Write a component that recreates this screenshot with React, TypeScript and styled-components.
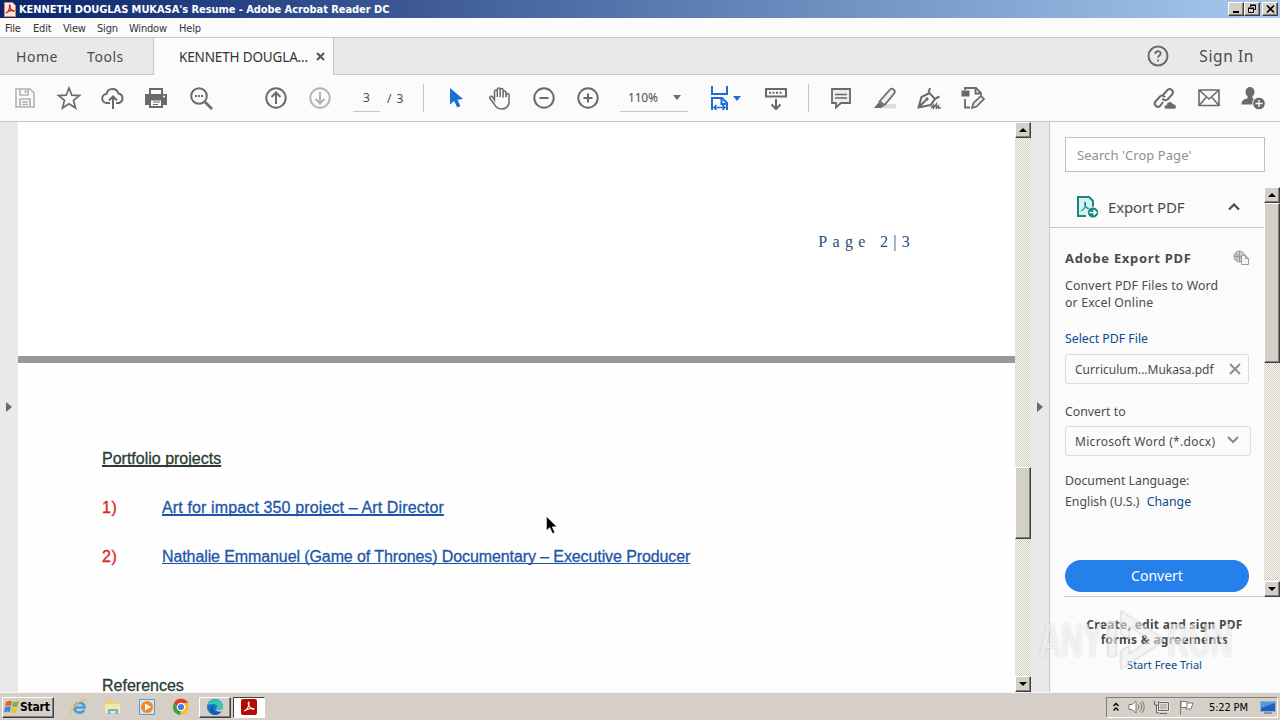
import type { ReactNode } from 'react';
import styled, { createGlobalStyle, css } from 'styled-components';

const GlobalStyle = createGlobalStyle`
  * {
    box-sizing: border-box;
  }

  body {
    margin: 0;
    overflow: hidden;
  }

  button {
    font: inherit;
    padding: 0;
    border: none;
    background: none;
  }

  svg {
    display: block;
    flex: none;
  }

  h1, h2, h3, p, ol {
    margin: 0;
    padding: 0;
    font-weight: normal;
  }
`;

type IconProps = { children: ReactNode; size?: number; color?: string };

const Icon = ({ children, size = 28, color = '#6a6a6a' }: IconProps) => (
  <svg
    width={size}
    height={size}
    viewBox={`0 0 ${size} ${size}`}
    fill='none'
    stroke={color}
    strokeWidth='2'
  >
    {children}
  </svg>
);

const TitleBar = () => (
  <StyledTitleBar>
    <svg width='12' height='15' viewBox='0 0 12 15'>
      <path d='M.5.5h8l3 3v11H.5z' fill='#fbe9e6' stroke='#d9806f' />
      <path d='M2 11c3-1 4-5 3.500-7.500C5 2.500 6.500 3 6 5c.500 3 3 4.500 4 4C9 8 5 8.500 2 11z' fill='none' stroke='#c8200f' strokeWidth='1.300' />
    </svg>
    <h1>KENNETH DOUGLAS MUKASA's Resume - Adobe Acrobat Reader DC</h1>
    <WindowButton>
      <svg width='11' height='10'><path d='M2 8h6' stroke='#000' strokeWidth='2' /></svg>
    </WindowButton>
    <WindowButton>
      <svg width='11' height='10' fill='none' stroke='#000'>
        <path d='M3.500 3V1.500h5v4H7M3 1h6M1.500 4.500h5v4h-5zM1 4h6' />
      </svg>
    </WindowButton>
    <WindowButton $gap>
      <svg width='11' height='10'><path d='M2 1.500l7 7M9 1.500l-7 7' stroke='#000' strokeWidth='1.600' /></svg>
    </WindowButton>
  </StyledTitleBar>
);

const Toolbar = () => (
  <StyledToolbar>
    <Tool>
      <Icon color='#b4b4b4'>
        <path d='M5 5h14l4 4v14H5zM9 5v6h8V5M9 23v-8h10v8M11 18h6M11 20.500h6M14.500 6v3' strokeWidth='1.700' />
      </Icon>
    </Tool>
    <Tool>
      <Icon>
        <path d='M14 4l2.800 7.200 7.700.4-6 4.800 2 7.600-6.500-4.300L7.500 24l2-7.600-6-4.800 7.700-.4z' strokeWidth='1.700' />
      </Icon>
    </Tool>
    <Tool>
      <Icon>
        <path d='M11 19H8a4.500 4.500 0 0 1-.5-9 6.200 6.200 0 0 1 12-.5 4.900 4.900 0 0 1 .5 9.500h-3M14 25V13M10 16.500l4-4 4 4' />
      </Icon>
    </Tool>
    <Tool $nudge={-1}>
      <Icon>
        <path d='M8 11V5h12v6' />
        <path d='M3 10h22v11H3z' fill='#6a6a6a' stroke='none' />
        <path d='M8 15.500h12V23H8z' fill='#fbfbfb' />
        <path d='M11 18h7M11 20.500h5' strokeWidth='1' />
        <path d='M21 12.500h2' stroke='#fff' strokeWidth='1.500' />
      </Icon>
    </Tool>
    <Tool>
      <Icon>
        <circle cx='12' cy='12' r='7.800' />
        <path d='M18 18l7 7' strokeWidth='2.600' />
        <path d='M8 12h2M11 12h2M14 12h2' />
      </Icon>
    </Tool>
    <Spacer $w={31} />
    <Tool>
      <Icon>
        <circle cx='14' cy='14' r='9.700' />
        <path d='M14 20V9M9.500 13L14 8.500l4.500 4.500' />
      </Icon>
    </Tool>
    <Tool>
      <Icon color='#b4b4b4'>
        <circle cx='14' cy='14' r='9.700' />
        <path d='M14 8v11M9.500 15l4.500 4.500 4.500-4.500' />
      </Icon>
    </Tool>
    <PageField>3</PageField>
    <PageTotal>/ 3</PageTotal>
    <Divider />
    <Spacer $w={10} />
    <Tool>
      <Icon>
        <path d='M8 4v16.500l4.200-3.600 3 6.500 3.200-1.500-3-6.200 5.600-.7z' fill='#1a6fd0' stroke='none' />
      </Icon>
    </Tool>
    <Tool>
      <Icon>
        <path d='M8.500 16V7.500c0-2 2.800-2 2.800 0V13 5.500c0-2 2.900-2 2.900 0V13 6c0-2 2.900-2 2.900 0v7.500V8.500c0-2 2.900-2 2.900 0V13l.5-2.500c.7-1.800 3-.8 2.600.8L23 19c-.8 4-3.600 6-7.500 6-3.500 0-5.500-1.500-7-4.500L4 14.500c-1-2 1.500-3 2.700-1.500z' strokeWidth='1.500' />
      </Icon>
    </Tool>
    <Tool>
      <Icon>
        <circle cx='14' cy='14' r='9.700' />
        <path d='M9.500 14h9' />
      </Icon>
    </Tool>
    <Tool>
      <Icon>
        <circle cx='14' cy='14' r='9.700' />
        <path d='M9.500 14h9M14 9.500v9' />
      </Icon>
    </Tool>
    <ZoomField>
      110%
      <Caret />
    </ZoomField>
    <Spacer $w={17} />
    <Icon color='#1a6fd0'>
      <path d='M7 2v8h15V2M7 26V14h10l5 5v7M16.500 14v6H22' />
      <path d='M9 23.500h10M11.500 21L9 23.500l2.500 2.500M17.500 21l2.500 2.500-2.500 2.500' strokeWidth='1.500' />
    </Icon>
    <Caret $color='#1a6fd0' />
    <Spacer $w={13} />
    <Tool>
      <Icon>
        <path d='M4 5h20v7.500H4zM14 15v10M9.500 20.500L14 25l4.500-4.500' />
        <path d='M7 8.700h14' strokeDasharray='2 1.500' />
      </Icon>
    </Tool>
    <Spacer $w={10} />
    <Divider />
    <Spacer $w={10} />
    <Tool>
      <Icon>
        <path d='M5 5h18v14H14l-5 4.500V19H5z' fill='#eee' strokeWidth='1.800' />
        <path d='M8 10.500h12M8 14h12' strokeWidth='1.300' />
      </Icon>
    </Tool>
    <Tool>
      <Icon>
        <path d='M13 20h12v4.500H9z' fill='#dcdcdc' stroke='none' />
        <path d='M8.500 17.500L19 5.500c2-2 6 .5 4.500 3.500l-10 12z' fill='#eee' strokeWidth='1.700' />
        <path d='M8 18l5 4-3 2H3z' fill='#6a6a6a' stroke='none' />
      </Icon>
    </Tool>
    <Tool>
      <Icon>
        <path d='M3.500 23.500L6.500 13l8-4 5.500 6-4.500 6zM4 23l7-7' strokeWidth='2' />
        <path d='M13.500 8.500l1.500-4.500M20.500 14.500l4-2' strokeWidth='2' />
        <circle cx='12' cy='15' r='1.700' fill='#6a6a6a' stroke='none' />
        <path d='M16 24l2.500-3v3l3-4v4l2-2v2H26' strokeWidth='1.500' />
      </Icon>
    </Tool>
    <Tool>
      <Icon>
        <path d='M2.500 6.500h8v6h-8z' fill='#6a6a6a' stroke='none' />
        <path d='M6 6V4h11l5 5v2M16.500 4v5.500H22M6 15v8.500h5' strokeWidth='1.800' />
        <path d='M13 24l1.500-5L22 12l3 3-7.500 7.500z' fill='#eee' strokeWidth='1.700' />
      </Icon>
    </Tool>
    <Grow />
    <Tool>
      <Icon>
        <path d='M12 18l-3 4c-3 2.500-7-1.500-4.500-4.500l4.500-5c1.700-1.500 4-1 5 .8M12 11l4.500-5c3-2.700 7 1 4.700 4.300l-4.700 5.200c-1.500 1.300-4 1-5-1' />
        <path d='M15 25c-2.500-.3-2.300-4 .5-4 .5-4 5.500-4 6.500-1 3-.5 4.500 4.500 1.500 5z' fill='#6a6a6a' stroke='#fbfbfb' strokeWidth='.6' />
      </Icon>
    </Tool>
    <Tool>
      <Icon>
        <path d='M4 6h20v15.500H4zM4 6l10 9L24 6M4 21.500l7-8M24 21.500l-7-8' strokeWidth='1.600' />
      </Icon>
    </Tool>
    <Tool>
      <Icon>
        <ellipse cx='11' cy='8' rx='4.500' ry='5' fill='#6a6a6a' stroke='none' />
        <path d='M2.500 20.500c0-4 2.500-5.500 6-6v-3h5v3c3 .4 4 1.500 4 6z' fill='#6a6a6a' stroke='none' />
        <circle cx='20' cy='19.500' r='6.300' fill='#6a6a6a' stroke='#fbfbfb' strokeWidth='1' />
        <path d='M20 16v7M16.500 19.500h7' stroke='#fff' strokeWidth='1.300' />
      </Icon>
    </Tool>
  </StyledToolbar>
);

const VScroll = ({ before, thumb }: { before: number; thumb: number }) => (
  <ScrollTrack>
    <ScrollButton><Triangle /></ScrollButton>
    <Spacer $h={before} />
    <ScrollThumb $h={thumb} />
    <Grow />
    <ScrollButton><Triangle $down /></ScrollButton>
  </ScrollTrack>
);

const projects = [
  { text: 'Art for impact 350 project – Art Director', spacing: '0.13px', thick: 2 },
  {
    text: 'Nathalie Emmanuel (Game of Thrones) Documentary – Executive Producer',
    spacing: '-0.1px',
    thick: 1,
  },
];

const DocumentView = () => (
  <StyledDocument>
    <PageEnd>
      <p>Page 2|3</p>
    </PageEnd>
    <Page>
      <Heading>Portfolio projects</Heading>
      <ol>
        {projects.map((project, i) => (
          <Project key={project.text}>
            <span className='number'>{i + 1})</span>
            <ProjectLink $spacing={project.spacing} $thick={project.thick}>
              {project.text}
            </ProjectLink>
          </Project>
        ))}
      </ol>
      <Heading $last>References</Heading>
    </Page>
    <Pointer width='12' height='18' viewBox='0 0 12 18'>
      <path d='M.5.500v14l3.300-3 2.700 6 2.300-1-2.600-5.700h4.600z' fill='#000' stroke='#fff' strokeWidth='.5' />
    </Pointer>
  </StyledDocument>
);

const ExportPanel = () => (
  <StyledPanel>
    <Search>Search 'Crop Page'</Search>
    <PanelBody>
      <PanelContent>
        <PanelHeader>
          <svg width='24' height='24' viewBox='0 0 24 24' fill='none' stroke='#14897f' strokeWidth='2'>
            <path d='M10 21H2V2h11l4 4v6' fill='#d5f1f5' />
            <path d='M5 16c3-1 5-5 4.500-8-.5-2-1.500 1 0 3 1 2 3 3 5 2.500' strokeWidth='1.200' />
            <circle cx='17' cy='17.500' r='5.500' fill='#14897f' stroke='#fff' strokeWidth='.8' />
            <path d='M13.500 17.500h6M17.500 15l2.500 2.500-2.500 2.500' stroke='#fff' strokeWidth='1.700' />
          </svg>
          <span>Export PDF</span>
          <svg width='14' height='10' fill='none' stroke='#4b4b4b' strokeWidth='2.200'><path d='M2 7.500l5-5 5 5' /></svg>
        </PanelHeader>
        <PanelTitle>
          Adobe Export PDF
          <svg width='17' height='16' fill='none' stroke='#999'>
            <circle cx='6.500' cy='6.500' r='5.500' fill='#ccc' />
            <path d='M1 6.500h11M6.500 1v11M3 3c2 3 2 5 0 7' />
            <path d='M8.500 5.500h4l3 3v6h-7z' fill='#f4f4f4' />
            <path d='M12.500 5.500v3h3' />
          </svg>
        </PanelTitle>
        <Label $mt={9} $ls='0.15px'>
          Convert PDF Files to Word
          <br />
          or Excel Online
        </Label>
        <Label $mt={19} $link>Select PDF File</Label>
        <SelectBox $w={184} $mt={7}>
          Curriculum...Mukasa.pdf
          <svg width='12' height='12' stroke='#8a8a8a' strokeWidth='1.800'><path d='M1 1l10 10M11 1L1 11' /></svg>
        </SelectBox>
        <Label $mt={19}>Convert to</Label>
        <SelectBox $w={186} $mt={6} $ls='0.3px'>
          Microsoft Word (*.docx)
          <svg width='12' height='8' fill='none' stroke='#8a8a8a' strokeWidth='2' className='chevron'>
            <path d='M1 1l5 5 5-5' />
          </svg>
        </SelectBox>
        <Label $mt={16}>Document Language:</Label>
        <Label $mt={4}>
          English (U.S.) <b>Change</b>
        </Label>
        <ConvertButton>Convert</ConvertButton>
      </PanelContent>
      <VScroll before={0} thumb={160} />
    </PanelBody>
    <PanelFooter>
      <h3>
        Create, edit and sign PDF
        <br />
        forms &amp; agreements
      </h3>
      <p>Start Free Trial</p>
    </PanelFooter>
    <Watermark>
      <span>ANY</span>
      <svg width='60' height='66' viewBox='0 0 60 66' fill='rgba(255,255,255,.5)' stroke='rgba(210,210,210,.7)'>
        <path d='M14 4l44 29-44 29V44l8-5v8l21-14-21-14v13l-8-5z' />
        <path d='M1 15h8v34H1z' />
      </svg>
      <span>RUN</span>
    </Watermark>
  </StyledPanel>
);

const Taskbar = () => (
  <StyledTaskbar>
    <StartButton>
      <svg width='16' height='16' viewBox='0 0 16 16'>
        <path d='M2 3q3-2 6-1L7 7Q4 6 1 7.500z' fill='#e8622a' />
        <path d='M9 2.500q3 1 6-.5l-1.500 5.500q-3 1-5.500 0z' fill='#7cb342' />
        <path d='M1 8.500q3-1.500 6-.5l-1.300 5q-3-1-5.700.5z' fill='#3f83d8' />
        <path d='M8 8.500q2.500 1 5.500 0l-1.400 5q-3 1-5.500 0z' fill='#f6c02c' />
      </svg>
      Start
    </StartButton>
    <Launcher>
      <svg width='18' height='18' viewBox='0 0 18 18' fill='none'>
        <path d='M4.500 9.500h10c0-6-9.500-6-10 0 0 6 7.500 6.500 9.500 2.500' stroke='#3d9fe0' strokeWidth='2.700' />
        <path d='M1.500 16C0 12 10 0 17 2.500' stroke='#f0c04a' strokeWidth='1.500' />
      </svg>
    </Launcher>
    <Launcher>
      <svg width='18' height='18' viewBox='0 0 18 18'>
        <path d='M2 4V2.500h5L8.500 4H15v11H2z' fill='#f1cf70' />
        <path d='M1 6h15v9H1z' fill='#fae7a2' />
        <path d='M4 16v-5h10v5h-2.500v-3h-5v3z' fill='#66b6e2' />
      </svg>
    </Launcher>
    <Launcher>
      <svg width='18' height='18' viewBox='0 0 18 18'>
        <path d='M1.500 1.500h15v15h-15z' fill='#cfe6f7' stroke='#5b9bc9' />
        <circle cx='9' cy='9' r='6' fill='#f28a1c' />
        <path d='M7 5.500l6 3.500-6 3.500z' fill='#fff' />
      </svg>
    </Launcher>
    <Launcher>
      <svg width='18' height='18' viewBox='0 0 18 18'>
        <circle cx='9' cy='9' r='8' fill='#f9c526' />
        <path d='M2 5a8 8 0 0 1 14 0H9L5 9z' fill='#e23c2e' />
        <path d='M2 5l4.500 6.500L9 13l-1 4A8 8 0 0 1 2 5z' fill='#31a350' />
        <circle cx='9' cy='9' r='3.700' fill='#3c7de8' stroke='#fff' strokeWidth='1.200' />
      </svg>
    </Launcher>
    <AppButton>
      <svg width='18' height='18' viewBox='0 0 18 18'>
        <circle cx='9' cy='9' r='8' fill='#1879ca' />
        <path d='M1.500 7C4-1 17 0 17 8c0 4-5 4.500-7 3 2-2 1-5-2-5-3 0-5 0-6.500 1z' fill='#38c6b0' />
        <path d='M8 8c-3 4 2 8 7 5.500-4 6-12 3-11-2C4.500 9 6 8 8 8z' fill='#125ba8' />
        <path d='M10 11c2 1.500 5 1 7-1l-1 3c-3 1.500-6 0-6-2z' fill='#d6cfc8' />
      </svg>
    </AppButton>
    <AppButton $active>
      <svg width='16' height='16' viewBox='0 0 16 16'>
        <rect width='16' height='16' rx='2' fill='#b30b00' />
        <path d='M3 12c3-1 5.500-5 5-8.500-.5-1.500-1.500 1 0 3.500 1.500 2.500 3.500 3.500 5 3-.5-1.500-6-.5-10 2z' fill='none' stroke='#fff' strokeWidth='1.100' />
      </svg>
    </AppButton>
    <Grow />
    <Tray>
      <svg width='8' height='12' fill='none' stroke='#000' strokeWidth='1.400'><path d='M1.500 5L4 2.500 6.500 5M1.500 9.500L4 7l2.500 2.500' /></svg>
      <svg width='17' height='16' fill='none' stroke='#777'>
        <path d='M1 5.500h3L8 2v12l-4-3.500H1z' fill='#fff' />
        <path d='M10 5.500q2 2.500 0 5M12 3.500q3.500 4.500 0 9M14 2q4.500 6 0 12' />
      </svg>
      <svg width='17' height='16' fill='none' stroke='#666'>
        <path d='M5.500 3.500h10v8h-10z' fill='#bbb' stroke='#fff' strokeWidth='2' />
        <path d='M5.500 3.500h10v8h-10zM7 14.500h7M1.500 2v4h4V2M3.500 6v8h3' />
      </svg>
      <svg width='17' height='16' fill='#fff' stroke='#777'>
        <path d='M2.500 1.500v14M3 2.500h6v6H3zM9 4h6l-2 6H8V8.500' />
      </svg>
      <time>5:22 PM</time>
      <svg width='16' height='13'>
        <path d='M.5.500h15v10H.5z' fill='#1d64b8' stroke='#9ac' />
        <path d='M1 7l14-5v-1H1z' fill='#4b9be6' />
        <path d='M4 12h8' stroke='#557' />
      </svg>
    </Tray>
  </StyledTaskbar>
);

const App = () => (
  <Window>
    <GlobalStyle />
    <TitleBar />
    <MenuBar>
      <MenuItem $w={28}>File</MenuItem>
      <MenuItem $w={30}>Edit</MenuItem>
      <MenuItem $w={34}>View</MenuItem>
      <MenuItem $w={32}>Sign</MenuItem>
      <MenuItem $w={50}>Window</MenuItem>
      <MenuItem $w={30}>Help</MenuItem>
    </MenuBar>
    <TabBar>
      <HomeTabs>
        <span>Home</span>
        <span>Tools</span>
      </HomeTabs>
      <ActiveTab>
        KENNETH DOUGLA...
        <svg width='9' height='9' stroke='#555' strokeWidth='2'><path d='M1 1l7 7M8 1L1 8' /></svg>
      </ActiveTab>
      <Account>
        <svg width='22' height='22' fill='none' stroke='#6a6a6a' strokeWidth='2'>
          <circle cx='11' cy='11' r='9.500' />
          <path d='M8.300 9c0-3.700 5.400-3.500 5.400-.5 0 2-2.700 2-2.700 4.200M11 14.500v2' strokeWidth='1.800' />
        </svg>
        <span>Sign In</span>
      </Account>
    </TabBar>
    <Toolbar />
    <Workspace>
      <Gutter $w={18}><SideArrow /></Gutter>
      <DocumentView />
      <VScroll before={329} thumb={72} />
      <Gutter $w={18}><SideArrow /></Gutter>
      <ExportPanel />
    </Workspace>
    <Taskbar />
  </Window>
);

const classicFont = "'DejaVu Sans Condensed', 'DejaVu Sans', sans-serif";
const panelFont = "'Noto Sans', 'Open Sans', sans-serif";

const raised = css`
  background: #d4d0c8;
  border: 1px solid;
  border-color: #fff #404040 #404040 #fff;
  box-shadow: inset -1px -1px #808080;
`;

const Window = styled.div`
  width: 1280px;
  height: 720px;
  display: flex;
  flex-direction: column;
  overflow: hidden;
  background: #fbfbfb;
  color: #4b4b4b;
  font-family: ${panelFont};
  white-space: nowrap;
`;

const Grow = styled.div`
  flex: 1;
`;

const Spacer = styled.div<{ $w?: number; $h?: number }>`
  flex: none;
  width: ${({ $w = 0 }) => $w}px;
  height: ${({ $h = 0 }) => $h}px;
`;

const StyledTitleBar = styled.header`
  flex: none;
  height: 18px;
  display: flex;
  align-items: center;
  padding: 0 2px 0 4px;
  background: linear-gradient(90deg, #0a246a, #a6caf0);

  h1 {
    flex: 1;
    margin-left: 3px;
    color: #fff;
    font: bold 11px ${classicFont};
    letter-spacing: -0.06px;
  }
`;

const WindowButton = styled.button<{ $gap?: boolean }>`
  ${raised}
  width: 16px;
  height: 14px;
  margin-left: ${({ $gap }) => ($gap ? 2 : 0)}px;
  display: flex;
  align-items: center;
  justify-content: center;
`;

const MenuBar = styled.nav`
  flex: none;
  height: 20px;
  display: flex;
  align-items: center;
  padding: 2px 0 0 5px;
  border-bottom: 1px solid #c6c6c6;
  font: 11px ${classicFont};
  color: #333;
`;

const MenuItem = styled.span<{ $w: number }>`
  width: ${({ $w }) => $w}px;
  letter-spacing: -0.2px;
`;

const TabBar = styled.nav`
  flex: none;
  height: 37px;
  display: flex;
  background: #e9e9e9;
`;

const HomeTabs = styled.div`
  width: 154px;
  display: flex;
  align-items: center;
  gap: 29px;
  padding-left: 16px;
  border: solid #c6c6c6;
  border-width: 0 1px 1px 0;
  font-size: 14px;
  letter-spacing: 0.55px;
`;

const ActiveTab = styled.div`
  width: 179px;
  display: flex;
  align-items: center;
  justify-content: space-between;
  padding: 0 8px 0 25px;
  background: #fbfbfb;
  font-size: 13.5px;
  letter-spacing: -0.15px;
  color: #333;
`;

const Account = styled.div`
  flex: 1;
  display: flex;
  align-items: center;
  justify-content: flex-end;
  gap: 30px;
  padding-right: 26px;
  border: solid #c6c6c6;
  border-width: 0 0 1px 1px;
  font-size: 15.5px;
  letter-spacing: 0.6px;
`;

const StyledToolbar = styled.div`
  flex: none;
  height: 47px;
  display: flex;
  align-items: center;
  padding: 0 5px 0 3px;
  border-bottom: 1px solid #c6c6c6;
  font-size: 12px;
`;

const Tool = styled.button<{ $nudge?: number }>`
  flex: none;
  width: 44px;
  height: 44px;
  margin-left: ${({ $nudge = 0 }) => $nudge}px;
  margin-right: ${({ $nudge = 0 }) => -$nudge}px;
  display: flex;
  align-items: center;
  justify-content: center;
`;

const PageField = styled.div`
  width: 27px;
  height: 28px;
  margin: 0 7px 0 11px;
  line-height: 28px;
  text-align: center;
  border-bottom: 1px solid #c6c6c6;
`;

const PageTotal = styled.span`
  width: 36px;
  word-spacing: 2px;
`;

const Divider = styled.i`
  width: 1px;
  height: 28px;
  background: #c6c6c6;
`;

const ZoomField = styled.div`
  width: 68px;
  height: 28px;
  margin-left: 10px;
  padding: 0 7px 0 8px;
  display: flex;
  align-items: center;
  justify-content: space-between;
  border-bottom: 1px solid #c6c6c6;
  letter-spacing: -0.2px;
`;

const Caret = styled.i<{ $color?: string }>`
  border: 4px solid transparent;
  border-top: 5px solid ${({ $color = '#6a6a6a' }) => $color};
  border-bottom: 0;
`;

const Workspace = styled.main`
  flex: none;
  height: 570px;
  display: flex;
`;

const Gutter = styled.aside<{ $w: number }>`
  flex: none;
  width: ${({ $w }) => $w}px;
  display: flex;
  align-items: center;
  justify-content: center;
  background: #e9e9e9;
`;

const SideArrow = styled.i`
  border: 5px solid transparent;
  border-left: 6px solid #6a6a6a;
  border-right: 0;
`;

const StyledDocument = styled.article`
  position: relative;
  width: 997px;
  overflow: hidden;
  background: #999;
  font-family: 'Liberation Sans', Arial, sans-serif;
  font-size: 16px;
`;

const PageEnd = styled.section`
  height: 234px;
  padding: 110px 100px 0 0;
  background: #fff;
  text-align: right;
  color: #1f4e79;
  font: 16px/20px 'Liberation Serif', serif;
  letter-spacing: 5.3px;
`;

const Page = styled.section`
  height: 340px;
  margin-top: 7px;
  padding: 84px 84px 0;
  background: #fefefe;
`;

const Heading = styled.h2<{ $last?: boolean }>`
  height: ${({ $last }) => ($last ? 20 : 49)}px;
  margin-top: ${({ $last }) => ($last ? 80 : 0)}px;
  line-height: 23px;
  font-size: 16px;
  color: #2b3c33;
  -webkit-text-stroke: 0.3px;
  text-decoration: underline;
  text-decoration-thickness: 1.5px;
  text-underline-offset: 1px;
  text-decoration-skip-ink: none;
`;

const Project = styled.li`
  height: 49px;
  display: flex;
  line-height: 23px;

  .number {
    width: 60px;
    color: #e0201c;
    letter-spacing: 0.5px;
    -webkit-text-stroke: 0.3px;
  }
`;

const ProjectLink = styled.a<{ $spacing: string; $thick: number }>`
  color: #1d55a8;
  letter-spacing: ${({ $spacing }) => $spacing};
  -webkit-text-stroke: 0.3px;
  text-decoration: underline;
  text-decoration-thickness: ${({ $thick }) => $thick}px;
  text-underline-offset: 1px;
  text-decoration-skip-ink: none;
`;

const Pointer = styled.svg`
  position: absolute;
  left: 528px;
  top: 394px;
`;

const ScrollTrack = styled.div`
  flex: none;
  width: 16px;
  display: flex;
  flex-direction: column;
  background: repeating-conic-gradient(#d0ccc2 0 25%, #fbfbf8 0 50%) 0 0 / 2px 2px;
`;

const ScrollButton = styled.button`
  ${raised}
  width: 16px;
  height: 16px;
  display: flex;
  align-items: center;
  justify-content: center;
`;

const ScrollThumb = styled.div<{ $h: number }>`
  ${raised}
  height: ${({ $h }) => $h}px;
`;

const Triangle = styled.i<{ $down?: boolean }>`
  border: 4px solid transparent;
  ${({ $down }) =>
    $down
      ? 'border-top-color: #000; border-bottom: 0;'
      : 'border-bottom-color: #000; border-top: 0;'}
`;

const StyledPanel = styled.aside`
  position: relative;
  flex: 1;
  padding-top: 15px;
  border-left: 1px solid #c6c6c6;
`;

const Search = styled.div`
  width: 200px;
  height: 35px;
  margin-left: 15px;
  padding-left: 11px;
  border: 1px solid #c0c0c0;
  background: #fff;
  line-height: 34px;
  font-size: 13px;
  letter-spacing: 0.06px;
  color: #909090;
`;

const PanelBody = styled.div`
  height: 410px;
  margin-top: 15px;
  display: flex;
`;

const PanelContent = styled.div`
  width: 214px;
  padding-left: 15px;
`;

const PanelHeader = styled.div`
  height: 41px;
  margin-left: -15px;
  padding: 0 23px 0 26px;
  display: flex;
  align-items: center;
  border-bottom: 1px solid #c6c6c6;
  font-size: 15px;
  letter-spacing: -0.15px;

  span {
    flex: 1;
    margin-left: 8px;
  }
`;

const PanelTitle = styled.h2`
  height: 20px;
  margin-top: 20px;
  padding-right: 14px;
  display: flex;
  justify-content: space-between;
  align-items: center;
  font-size: 13px;
  font-weight: bold;
  letter-spacing: 0.7px;
`;

const Label = styled.p<{ $mt: number; $link?: boolean; $ls?: string }>`
  margin-top: ${({ $mt }) => $mt}px;
  line-height: 17px;
  font-size: 12.3px;
  letter-spacing: ${({ $ls = '0' }) => $ls};
  color: ${({ $link }) => ($link ? '#0b4a8f' : '#4b4b4b')};

  b {
    margin-left: 4px;
    font-weight: normal;
    color: #0b4a8f;
  }
`;

const SelectBox = styled.div<{ $w: number; $mt: number; $ls?: string }>`
  width: ${({ $w }) => $w}px;
  height: 30px;
  margin-top: ${({ $mt }) => $mt}px;
  padding: 0 7px 0 9px;
  display: flex;
  align-items: center;
  justify-content: space-between;
  border: 1px solid #dcdcdc;
  border-radius: 3px;
  font-size: 12px;
  letter-spacing: ${({ $ls = '0' }) => $ls};

  .chevron {
    margin: 0 4px 2px 0;
  }
`;

const ConvertButton = styled.button`
  width: 184px;
  height: 32px;
  margin-top: 50px;
  padding-bottom: 1px;
  border-radius: 16px;
  background: #2680eb;
  color: #fff;
  font-size: 14px;
`;

const PanelFooter = styled.footer`
  margin: -1px 0 0 14px;
  padding: 20px 15px 0 0;
  border-top: 1px solid #c6c6c6;
  text-align: center;

  h3 {
    font-size: 12px;
    font-weight: bold;
    line-height: 15px;
    letter-spacing: 0.28px;
  }

  p {
    margin-top: 10px;
    line-height: 16px;
    font-size: 11px;
    color: #0b4a8f;
  }
`;

const Watermark = styled.div`
  position: absolute;
  left: -11px;
  top: 485px;
  display: flex;
  align-items: center;
  color: rgba(255, 255, 255, 0.6);
  text-shadow: 0 0 3px rgba(0, 0, 0, 0.16);
  font: bold 46px/66px 'Liberation Sans', sans-serif;

  svg {
    filter: drop-shadow(0 0 1px rgba(0, 0, 0, 0.15));
  }

  span {
    width: 68px;
    transform: scaleX(0.66);
    transform-origin: left;
  }
`;

const StyledTaskbar = styled.footer`
  flex: none;
  height: 28px;
  display: flex;
  align-items: center;
  padding: 1px 2px 0;
  border-top: 1px solid #f4f2ee;
  background: #d6cfc8;
  color: #000;
  font: 11px ${classicFont};
`;

const StartButton = styled.button`
  ${raised}
  width: 52px;
  height: 21px;
  margin-right: 16px;
  display: flex;
  align-items: center;
  padding-left: 1px;
  font: bold 12px ${classicFont};
  letter-spacing: -0.2px;
  color: #000;
`;

const Launcher = styled.button`
  width: 18px;
  margin-right: 16px;
`;

const AppButton = styled.button<{ $active?: boolean }>`
  ${raised}
  width: 32px;
  height: 21px;
  margin-left: ${({ $active }) => ($active ? 2 : -7)}px;
  display: flex;
  align-items: center;
  justify-content: center;
  ${({ $active }) =>
    $active &&
    css`
      background: #fff;
      border-color: #404040 #fff #fff #404040;
      box-shadow: none;
    `}
`;

const Tray = styled.div`
  width: 172px;
  height: 21px;
  display: flex;
  align-items: center;
  gap: 8px;
  padding: 0 0 0 5px;
  border: 1px solid;
  border-color: #808080 #fff #fff #808080;

  time {
    margin: 0 4px 0 6px;
    letter-spacing: -0.15px;
  }
`;

export default App;
